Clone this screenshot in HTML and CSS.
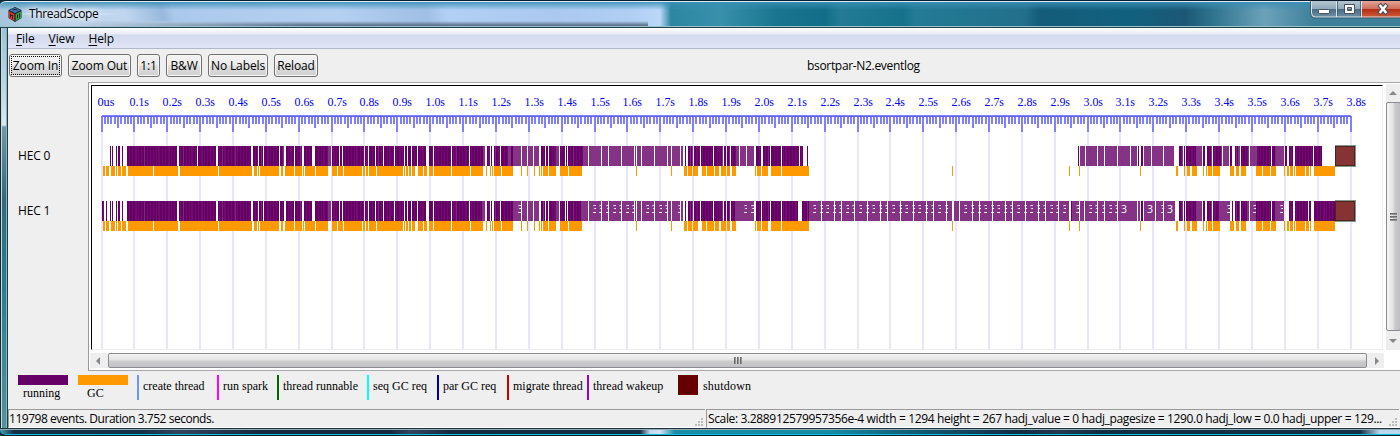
FILE: index.html
```html
<!DOCTYPE html>
<html lang="en">
<head>
<meta charset="utf-8">
<title>ThreadScope</title>
<link rel="stylesheet" href="styles.css">
</head>
<body>
<div class="window">
  <header class="titlebar">
    <svg class="app-icon" width="14" height="15" viewBox="0 0 14 15">
      <path d="M7 0 13.500 3v8L7 15 .5 11V3z" fill="#222"/>
      <path d="M7 .8 12.500 3.200 7 6 1.500 3.200z" fill="#3c78bd"/>
      <path d="M1 4.200 6.400 7v7L1 10.800z" fill="#df3034"/>
      <path d="M13 4.200 7.600 7v7l5.400-3.200z" fill="#27aa3c"/>
      <path d="M5 3.300 7 2.300l2.500 1M2.500 6.500v4M4.500 8v4M2.500 8l2 1M9.500 7.500v4M11.500 6.500v4" fill="none" stroke="#222" stroke-width="1"/>
    </svg>
    <span class="title">ThreadScope</span>
    <svg class="controls" width="90" height="20" viewBox="0 0 90 20">
      <defs>
        <linearGradient id="glass" x1="0" y1="0" x2="0" y2="1"><stop offset="0" stop-color="#b5c5d1"/><stop offset=".48" stop-color="#8fa7b8"/><stop offset=".5" stop-color="#4b6c84"/><stop offset="1" stop-color="#7195a8"/></linearGradient>
        <linearGradient id="close" x1="0" y1="0" x2="0" y2="1"><stop offset="0" stop-color="#e3a597"/><stop offset=".48" stop-color="#cf6c57"/><stop offset=".5" stop-color="#b52e16"/><stop offset="1" stop-color="#d0603c"/></linearGradient>
      </defs>
      <path d="M1 0v13q0 4 4 4h85V0z" fill="url(#glass)"/>
      <path d="M52 0h38v17H52z" fill="url(#close)"/>
      <path d="M1.500 0v12q0 4 4 4H90M26.500 0v16M51.500 0v16" fill="none" stroke="#d8e4e9"/>
      <path d="M.5 0v12.500q0 4.500 4.500 4.500h85M27.500 0v15M50.500 0v15" fill="none" stroke="#34566b" stroke-opacity=".7"/>
      <rect x="8.500" y="8.500" width="11" height="4" rx="1" fill="#fff" stroke="#48505e"/>
      <path d="M34.500 3.500h10v9h-10zM37.500 6.500v3h4v-3z" fill="#fff" fill-rule="evenodd" stroke="#48505e"/>
      <path d="m70.500 5 5 6M75.500 5l-5 6" stroke="#484d5e" stroke-width="4.500" stroke-linecap="square"/>
      <path d="m70.500 5 5 6M75.500 5l-5 6" stroke="#fff" stroke-width="2.500" stroke-linecap="square"/>
    </svg>
  </header>
  <div class="side-border"></div>
  <main class="client">
    <nav class="menu"><span><u>F</u>ile</span><span><u>V</u>iew</span><span><u>H</u>elp</span></nav>
    <div class="toolbar">
      <button class="focus b1">Zoom In</button><button class="b2">Zoom Out</button><button class="b3">1:1</button><button class="b4">B&amp;W</button><button class="b5">No Labels</button><button class="b6">Reload</button>
      <span class="filename">bsortpar-N2.eventlog</span>
    </div>
    <section class="workspace">
      <div class="labels"><span>HEC 0</span><span>HEC 1</span></div>
      <div class="frame">
        <div class="view">
          <svg id="timeline" width="1290" height="263" viewBox="92 86 1290 263"></svg>
          <div class="vscroll"><i class="arrow up"></i><div class="vthumb"><i></i><i></i><i></i></div><i class="arrow down"></i></div>
        </div>
        <div class="hscroll"><i class="arrow left"></i><div class="hthumb"><i></i><i></i><i></i></div><i class="arrow right"></i></div>
      </div>
    </section>
    <footer class="legend">
      <div class="bar running"><i></i><span>running</span></div>
      <div class="bar gc"><i></i><span>GC</span></div>
      <div class="event create">create thread</div>
      <div class="event spark">run spark</div>
      <div class="event runnable">thread runnable</div>
      <div class="event seq">seq GC req</div>
      <div class="event par">par GC req</div>
      <div class="event migrate">migrate thread</div>
      <div class="event wakeup">thread wakeup</div>
      <div class="shutdown"><i></i><span>shutdown</span></div>
    </footer>
    <div class="status">
      <div class="events"><span>119798 events. Duration 3.752 seconds.</span><svg width="9" height="9"><path d="M7 0h2v2H7zM7 3h2v2H7zM7 6h2v2H7zM4 3h2v2H4zM4 6h2v2H4zM1 6h2v2H1z" fill="#bdbdbd"/></svg></div>
      <div class="scale"><span>Scale: 3.288912579957356e-4 width = 1294 height = 267 hadj_value = 0 hadj_pagesize = 1290.0 hadj_low = 0.0 hadj_upper = 129...</span><svg width="9" height="9"><path d="M7 0h2v2H7zM7 3h2v2H7zM7 6h2v2H7zM4 3h2v2H4zM4 6h2v2H4zM1 6h2v2H1z" fill="#bdbdbd"/></svg></div>
    </div>
  </main>
  <div class="bottom-border"></div>
</div>
<script src="timeline.js"></script>
</body>
</html>
```
FILE: styles.css
```css
* { box-sizing: border-box; }
body { margin: 0; width: 1400px; height: 436px; overflow: hidden; background: #0b2f3d; font: 12px "Open Sans", "Noto Sans", sans-serif; color: #000; }
.window { width: 1400px; height: 436px; display: grid; grid-template: 28px 400px 8px / 8px 1392px; }
.titlebar { grid-column: 1 / 3; display: flex; align-items: flex-start; padding-left: 8px; border-top: 1px solid #071b2e; border-bottom: 1px solid #23434e; border-top-left-radius: 6px; box-shadow: inset 0 1px #d9edf6, inset 0 -1px #9bc2cb;
  background:
    linear-gradient(#3a8fb6 0, #3a8fb600 9px),
    linear-gradient(90deg, #b9d0e8 0, #b9d0e800 220px) 80px 20px / 568px 6px no-repeat,
    linear-gradient(0deg, #5b728c 0, #5b728cee 2px, #5b728c00 6px) 80px 0 / 568px 100% no-repeat,
    radial-gradient(ellipse at 65px 13px, #eef5fb 0, #eef5fbcc 40px, #eef5fb00 75px),
    linear-gradient(75deg, #a3c5dd 0, #bdd3ea 60px, #c0d6f0 125px, #98b9dc 160px, #abc9eb 172px, #b4d0f1 330px, #a0bfe4 415px, #b2d0f4 435px, #abc9ef 540px, #b0cff3 615px, #bbd8f8 640px, #bbd8f8 100%) 0 0 / 658px 100% no-repeat,
    linear-gradient(90deg, #b9d7f7 0, #b9d7f7 660px, #2c86a2 671px, #3890ab 720px, #1a7690 775px, #126e88 825px, #237b94 840px, #15718b 903px, #237b94 915px, #226f8b 1025px, #145c79 1040px, #11617e 1130px, #1c5876 1185px, #2c718c 1210px, #6ba2ba 1265px, #3e7f99 1315px); }
.app-icon { margin-top: 6px; flex: none; }
.title { margin: 4px 0 0 7px; line-height: 17px; width: 72px; letter-spacing: -.35px; white-space: nowrap; text-shadow: 0 0 7px #fff, 0 0 9px #fff; }
.controls { margin-left: auto; flex: none; }
.side-border { border-left: 1px solid #19242b; border-right: 1px solid #253b43; box-shadow: inset 1px 0 #c2dde4, inset -1px 0 #86b4bc; background: linear-gradient(#9dc4d9, #bed6e3 60px, #dee8ed 97px, #7397a8 99px, #346a7c 170px, #287e90 260px, #55929e 400px); }
.bottom-border { grid-column: 1 / 3; border-top: 1px solid #1d3440; border-bottom: 1px solid #08202a; border-bottom-left-radius: 6px; box-shadow: inset 0 1px #94aeb6, inset 0 -1px #12bce1; background: linear-gradient(90deg, #49a0b4, #152f46 14px, #15304a 140px, #32435c 180px, #14293e 260px, #14293e 390px, #32465e 410px, #14293e 450px, #132d43 640px, #bed7f0 650px, #d3e2f3 660px, #198da5 675px, #178ba4 830px, #12627b 900px, #112b43 1020px, #25394f 1060px, #112b43 1100px, #152f46 1360px, #bed7f0 1380px, #bed7f0); }
.client { display: flex; flex-direction: column; background: #efefef; min-width: 0; }
.menu { height: 21px; flex: none; display: flex; gap: 14px; padding-left: 8px; line-height: 21px; letter-spacing: -.1px; background: linear-gradient(#fff, #e8ebf5 6px, #d3daed 7px, #e0e5f5 20px); border-bottom: 1px solid #b3b9cd; }
.menu u { text-underline-offset: 2px; }
.toolbar { height: 33px; flex: none; display: flex; align-items: flex-start; padding: 5px 0 0 1px; }
button { height: 23px; margin: 0 6px 0 0; padding: 0; border: 1px solid #707070; border-radius: 3px; background: linear-gradient(#f3f3f3, #ececec 10px, #dedede 11px, #d0d0d0); box-shadow: inset 0 0 0 1px #f8f8f8; font: inherit; letter-spacing: -.12px; line-height: 20px; white-space: nowrap; }
.focus { outline: 1px dotted #000; outline-offset: -3px; }
.b1 { width: 53px; } .b2 { width: 63px; } .b3 { width: 23px; } .b4 { width: 36px; } .b5 { width: 60px; } .b6 { width: 44px; }
.filename { margin-left: 483px; line-height: 23px; letter-spacing: -.32px; white-space: nowrap; }
.workspace { height: 289px; flex: none; display: flex; }
.labels { width: 80px; flex: none; display: flex; flex-direction: column; padding: 64px 0 0 10px; gap: 35px; line-height: 20px; letter-spacing: -.15px; }
.frame { width: 1312px; border-left: 1px solid #999; border-top: 1px solid #a6a6ab; border-bottom: 1px solid #a6a6ab; background: #fff; padding-top: 1px; }
.view { display: flex; height: 267px; }
#timeline { box-sizing: content-box; flex: none; margin: 1px 0 0 2px; border-left: 1px solid #000; border-top: 1px solid #000; border-right: 1px solid #eee; border-bottom: 1px solid #eee; }
.vscroll { margin-left: 3px; width: 14px; height: 266px; flex: none; overflow: hidden; background: #eee; display: flex; flex-direction: column; align-items: center; padding: 7px 0; }
.vthumb { width: 15px; height: 232px; margin: 7px 0 8px 1px; border: 1px solid #8c8c90; border-radius: 2px; background: linear-gradient(90deg, #f5f5f5, #e3e3e3 6px, #c9c9ce 8px, #bebec4); display: flex; flex-direction: column; align-items: center; justify-content: center; gap: 1px; }
.vthumb i { width: 7px; height: 2px; background: linear-gradient(#555, #aaa); }
.hscroll { height: 15px; margin: 2px 16px 0 1px; display: flex; align-items: center; background: #eee; padding: 0 6px; }
.hthumb { width: 1259px; height: 15px; margin: 0 8px 0 8px; flex: none; border: 1px solid #8c8c90; border-radius: 2px; background: linear-gradient(#f5f5f5, #e3e3e3 6px, #cdcdd0 7px, #c2c2c7); display: flex; align-items: center; justify-content: center; gap: 1px; }
.hthumb i { width: 2px; height: 7px; background: linear-gradient(90deg, #555, #aaa); }
.arrow { flex: none; width: 0; height: 0; border: 4px solid transparent; }
.up { border-width: 0 4px 4px; border-bottom-color: #888; }
.down { border-width: 4px 4px 0; border-top-color: #888; }
.left { border-width: 4px 4px 4px 0; border-right-color: #888; }
.right { border-width: 4px 0 4px 4px; border-left-color: #888; }
.legend { height: 38px; flex: none; display: flex; align-items: flex-start; padding: 4px 0 0 10px; font: 12px "Liberation Serif", serif; white-space: nowrap; }
.bar { width: 60px; display: flex; flex-direction: column; }
.bar i { width: 50px; height: 10px; }
.bar span { line-height: 16px; }
.running i { background: #606; } .running span { padding-left: 5px; }
.gc i { background: #f90; } .gc span { padding-left: 9px; }
.event { height: 25px; border-left: 2px solid; padding-left: 4px; line-height: 22px; }
.create { border-color: #69f; width: 80px; margin-left: -1px; }
.spark { border-color: #f0f; width: 60px; }
.runnable { border-color: #060; width: 90px; }
.seq { border-color: #0ff; width: 70px; }
.par { border-color: #00a; width: 70px; }
.migrate { border-color: #c00; width: 80px; }
.wakeup { border-color: #90c; width: 91px; }
.shutdown { display: flex; line-height: 22px; gap: 5px; letter-spacing: .2px; }
.shutdown i { width: 20px; height: 20px; background: #600; }
.status { height: 19px; flex: none; display: flex; line-height: 18px; white-space: nowrap; }
.status > div { border-top: 1px solid #999; border-left: 1px solid #999; border-bottom: 1px solid #fff; display: flex; justify-content: space-between; align-items: center; }
.status svg { flex: none; margin: 7px 2px 0 0; }
.events { width: 697px; letter-spacing: -.47px; }
.scale { width: 693px; margin-left: 1px; padding-left: 1px; letter-spacing: -.355px; }
.axis-label { font: 12px "Liberation Serif", serif; fill: #00f; }
.mark { font: 10.500px "Open Sans", sans-serif; fill: #fff; }
```
FILE: timeline.js
```javascript
const svg = document.getElementById("timeline");
const NS = "http://www.w3.org/2000/svg";

function add(name, attrs, parent = svg) {
  const el = document.createElementNS(NS, name);
  for (const key in attrs) el.setAttribute(key, attrs[key]);
  parent.appendChild(el);
  return el;
}
const rect = (x, y, width, height, fill) => add("rect", { x, y, width, height, fill, "shape-rendering": "crispEdges" });

// Axis: labels, ticks every 0.01 s and a grid line every 0.1 s.
for (let i = 0; i <= 380; i++) {
  const x = Math.floor(101 + i * 3.287);
  const major = i % 10 === 0;
  rect(x, 116, 2, major ? 16 : i % 5 === 0 ? 12 : 8, "#8080ff");
  if (major) {
    rect(x, 132, 2, 217, "#e6e6ff");
    add("text", { x: x - 3.500, y: 106, class: "axis-label", textLength: i ? 19.500 : 17, lengthAdjust: "spacingAndGlyphs" }).textContent = i ? (i / 100).toFixed(1) + "s" : "0us";
  }
}
rect(102, 115, 1249, 1, "#8080ff");
rect(102, 116, 1249, 1, "#6060f4");

const shared1 = "127-177 218-251 253-258 259-263 264-279 280-284 286-294 295-302 304-312 315-331 332-339 340-342 343-364 365-368 369-375 376-383 384-394 395-404 405-407 408-411 412-417 418-426 429-433 434-451 452-469 470-485 487-490 491-492 494-500 501-513 513-521 522-527 528-533 534-539 541-545 546-548 549-559 560-565 566-567 568-588 589-601 602-608 609-621 622-634 635-636 637-641 642-654 655-667 668-671 672-680 681-683 685-686 688-693 694-700 701-713 714-723 724-726 727-730";
const shared2 = "1179-1183 1184-1185 1186-1202 1203-1205 1207-1212 1235-1240 1241-1249 1250-1271 1272-1284 1289-1293";
const running = [
  "110-111 112-113 116-117 118-120 122-123 179-197 198-216 " + shared1 + " 731-739 740-746 747-754 756-761 763-770 771-781 782-799 800-803 807-808 1078-1079 1080-1085 1086-1097 1098-1104 1105-1117 1118-1130 1131-1137 1138-1139 1141-1143 1144-1151 1152-1163 1164-1174 1213-1222 1223-1229 1230-1232 1285-1287 1295-1313 1314-1322 " + shared2,
  "102-104 106-107 110-111 112-113 116-117 118-120 122-123 179-216 " + shared1 + " 731-754 756-761 762-770 771-781 782-798 802-821 822-834 835-841 842-854 855-867 868-880 881-887 888-900 901-913 914-926 927-933 934-946 947-952 954-959 960-972 973-979 980-992 993-1005 1006-1012 1013-1025 1026-1038 1039-1045 1046-1058 1059-1069 1071-1079 1080-1084 1085-1097 1098-1104 1105-1117 1118-1137 1138-1140 1141-1143 1144-1155 1156-1163 1164-1175 1213-1230 1232-1233 1295-1308 1309-1311 1314-1335 " + shared2
];
const gc = "103-105 106-109 111-115 116-117 118-121 122-126 128-153 154-178 180-218 219-252 254-257 258-259 260-279 281-283 285-294 295-302 303-304 305-315 316-328 332-337 338-343 344-362 363-365 366-368 369-376 377-403 404-405 406-408 409-411 412-415 418-423 424-427 429-433 434-451 452-470 471-483 486-487 490-491 492-493 494-501 502-513 521-522 527-528 534-535 539-540 541-542 543-548 549-556 560-568 569-582 636-637 671-672 684-687 688-692 693-698 702-706 707-714 715-719 721-726 727-730 732-736 755-756 757-761 762-768 771-781 782-809 952-953 1069-1070 1079-1080 1140-1141 1176-1178 1184-1185 1187-1190 1192-1197 1203-1204 1206-1207 1208-1212 1213-1220 1230-1234 1236-1239 1241-1246 1256-1262 1263-1270 1271-1276 1284-1285 1287-1289 1290-1293 1294-1295 1296-1305 1306-1309 1310-1311 1314-1335";
// Stretches where a single slice is drawn translucent.
const sparse = [
  "283-285 328-331 483-485 508-511 513-541 556-559 583-684 692-693 722-723 736-754 1080-1138 1144-1175 1182-1183 1196-1202 1211-1212 1221-1230 1238-1240 1248-1257 1276-1284",
  "328-331 482-485 513-539 543-544 556-559 581-684 692-693 722-723 735-754 809-1070 1072-1141 1144-1175 1182-1183 1196-1202 1211-1212 1219-1230 1239-1240 1247-1256 1275-1284"
];
const spans = text => text.trim().split(/\s+/).map(s => s.split("-").map(Number));

[146, 201].forEach((top, row) => {
  const light = spans(sparse[row]);
  for (const [a, b] of spans(running[row])) {
    rect(a, top, b - a, 20, "#660066");
    for (let x = a + 1; x < b; x++) {
      if (x % 3 === 0 || x % 11 === 4) rect(x, top, 1, 20, x % 13 === 1 ? "#7c267c" : "#6f0d6f");
    }
    for (const [c, d] of light) {
      const start = Math.max(a, c), end = Math.min(b, d);
      if (end > start) rect(start, top, end - start, 20, "#853385");
    }
  }
  for (const [a, b] of spans(gc)) rect(a, top + 20, b - a, 10, "#ff9900");
  rect(1335, top - 1, 21, 22, "#8b9788");
  rect(1335, top, 20, 20, "#4c241f");
  rect(1336, top + 1, 18, 18, "#853333");
});

// Thread numbers, cut off where the next slice begins.
function mark(x, width) {
  const box = add("svg", { x, y: 203, width, height: 15 });
  add("text", { x: width === 3 ? -0.4 : 0, y: 10, class: "mark" }, box).textContent = "3";
}
[518, 593, 599, 606, 613, 619, 626, 632, 646, 652, 659, 665, 678, 744, 751, 1076, 1089, 1095, 1102, 1109, 1115, 1161, 1227, 1253, 1280].forEach(x => mark(x, 3));
for (let x = 813; x < 1066; x += 6.58) {
  if (Math.abs(x - 951) > 4 && Math.abs(x - 957) > 4) mark(Math.round(x), 3);
}
[1121, 1147, 1167].forEach(x => mark(x, 8));
```
